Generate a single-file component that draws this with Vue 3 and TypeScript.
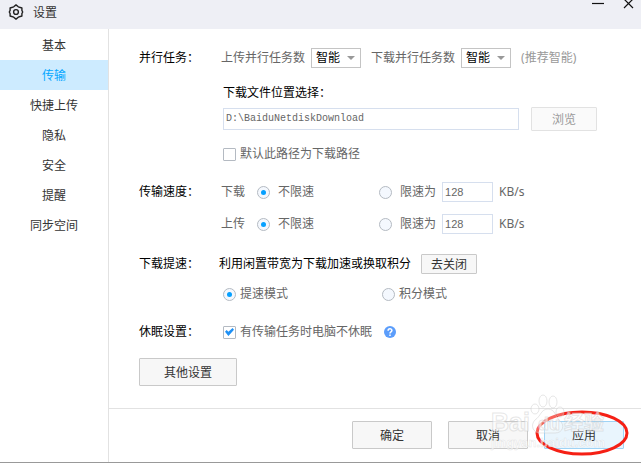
<script setup lang="ts">
import { ref } from 'vue'

type Limit = 'none' | 'custom'
interface SpeedRow {
  id: string
  name: string
  limit: Limit
  value: string
}

const tabs: string[] = ['基本', '传输', '快捷上传', '隐私', '安全', '提醒', '同步空间']
const activeTab = ref<string>('传输')

const uploadTasks = ref<string>('智能')
const downloadTasks = ref<string>('智能')
const taskOptions: string[] = ['智能', '1', '2', '3', '4', '5']

const downloadPath = ref<string>('D:\\BaiduNetdiskDownload')
const useAsDefault = ref<boolean>(false)
const keepAwake = ref<boolean>(true)
const boostMode = ref<string>('speed')

const speeds = ref<SpeedRow[]>([
  { id: 'down', name: '下载', limit: 'none', value: '128' },
  { id: 'up', name: '上传', limit: 'none', value: '128' },
])
</script>

<template>
  <div class="window">
    <header class="titlebar">
      <svg class="gear" viewBox="0 0 16 16" aria-hidden="true">
        <path d="M8 0.9 L10.3 2.8 L13.9 4 V6.4 L14.7 8 L13.9 9.6 V12 L10.3 13.2 L8 15.1 L5.7 13.2 L2.1 12 V9.6 L1.3 8 L2.1 6.4 V4 L5.7 2.8 Z" />
        <circle cx="8" cy="8" r="2.4" />
      </svg>
      <h1>设置</h1>
      <div class="controls">
        <button type="button" aria-label="最小化">
          <svg viewBox="0 0 12 12"><path d="M0 4.5 H12" /></svg>
        </button>
        <button type="button" aria-label="关闭">
          <svg viewBox="0 0 12 12"><path d="M1 0 L10 9 M10 0 L1 9" /></svg>
        </button>
      </div>
    </header>

    <div class="body">
      <nav class="sidebar">
        <button
          v-for="tab in tabs"
          :key="tab"
          type="button"
          :class="{ active: tab === activeTab }"
          @click="activeTab = tab"
        >{{ tab }}</button>
      </nav>

      <main class="main">
        <form class="settings" @submit.prevent>
          <section>
            <h2>并行任务：</h2>
            <div class="fields">
              <div class="row tasks">
                <label for="upload-tasks">上传并行任务数</label>
                <span class="select">
                  <select id="upload-tasks" v-model="uploadTasks">
                    <option v-for="o in taskOptions" :key="o">{{ o }}</option>
                  </select>
                  <svg viewBox="0 0 8 4"><path d="M0 0 H8 L4 4 Z" /></svg>
                </span>
                <label for="download-tasks" class="second">下载并行任务数</label>
                <span class="select">
                  <select id="download-tasks" v-model="downloadTasks">
                    <option v-for="o in taskOptions" :key="o">{{ o }}</option>
                  </select>
                  <svg viewBox="0 0 8 4"><path d="M0 0 H8 L4 4 Z" /></svg>
                </span>
                <span class="hint">(推荐智能)</span>
              </div>
              <div class="location">
                <label class="row strong" for="path">下载文件位置选择：</label>
                <div class="row path">
                  <input id="path" v-model="downloadPath" type="text" class="box mono" />
                  <button type="button" class="btn browse" disabled>浏览</button>
                </div>
                <label class="row check">
                  <input v-model="useAsDefault" type="checkbox" />默认此路径为下载路径
                </label>
              </div>
            </div>
          </section>

          <section>
            <h2>传输速度：</h2>
            <div class="fields speeds">
              <div v-for="s in speeds" :key="s.id" class="row speed">
                <span>{{ s.name }}</span>
                <label class="option">
                  <input v-model="s.limit" type="radio" :name="s.id" value="none" />不限速
                </label>
                <label class="option">
                  <input v-model="s.limit" type="radio" :name="s.id" value="custom" />限速为
                </label>
                <input v-model="s.value" type="text" class="box number" :aria-label="s.name + '限速'" />
                <span class="unit">KB/s</span>
              </div>
            </div>
          </section>

          <section>
            <h2>下载提速：</h2>
            <div class="fields">
              <div class="row strong">
                利用闲置带宽为下载加速或换取积分
                <button type="button" class="btn small">去关闭</button>
              </div>
              <div class="row modes">
                <label class="check">
                  <input v-model="boostMode" type="radio" name="boost" value="speed" />提速模式
                </label>
                <label class="check">
                  <input v-model="boostMode" type="radio" name="boost" value="points" />积分模式
                </label>
              </div>
            </div>
          </section>

          <section>
            <h2>休眠设置：</h2>
            <div class="row sleep">
              <label class="check">
                <input v-model="keepAwake" type="checkbox" />有传输任务时电脑不休眠
              </label>
              <svg class="help" viewBox="0 0 12 12" aria-hidden="true">
                <circle cx="6" cy="6" r="6" />
                <path d="M4.1 4.8 C4.1 2.2 7.9 2.2 7.9 4.6 C7.9 5.9 6 5.9 6 7.4" />
                <path d="M6 8.5 V9.9" />
              </svg>
            </div>
          </section>

          <button type="button" class="btn other">其他设置</button>
        </form>

        <footer class="footer">
          <button type="button" class="btn">确定</button>
          <button type="button" class="btn">取消</button>
          <span class="apply">
            <button type="button" class="btn primary">应用</button>
            <svg class="ring" viewBox="0 0 96 48" aria-hidden="true">
              <ellipse cx="48" cy="24" rx="45" ry="21" />
            </svg>
          </span>
          <svg class="watermark" viewBox="0 0 124 64" aria-hidden="true">
            <text class="brand" x="2" y="39">Bai</text>
            <g class="paw">
              <ellipse cx="46" cy="17" rx="4" ry="5" />
              <ellipse cx="54" cy="9" rx="4" ry="6" />
              <ellipse cx="64" cy="10" rx="4" ry="6" />
              <ellipse cx="71" cy="20" rx="4" ry="5" />
              <path d="M59 17 C52 17 52 24 46 28 C41 33 44 41 51 41 H66 C74 41 76 33 71 29 C66 24 66 17 59 17 Z" />
            </g>
            <text class="du" x="49" y="38">du</text>
            <text class="cn" x="75" y="38">经验</text>
            <text class="site" x="2" y="55">jingyan.baidu.com</text>
          </svg>
        </footer>
      </main>
    </div>
  </div>
</template>

<style>
body {
  margin: 0;
  background: #fff;
}
</style>

<style scoped>
.window {
  box-sizing: border-box;
  display: flex;
  flex-direction: column;
  min-height: calc(100vh - 1px);
  overflow: hidden;
  border-bottom: 1px solid #999;
  background: #fff;
  color: #666;
  font: 12px/20px "Noto Sans", "Noto Sans CJK SC", sans-serif;
}
.window *,
.window *::before {
  box-sizing: border-box;
}
button,
input,
select {
  margin: 0;
  padding: 0;
  font: inherit;
  color: inherit;
}
h1,
h2 {
  margin: 0;
  font-size: 12px;
  font-weight: 400;
}
label,
span {
  white-space: nowrap;
}

.titlebar {
  display: flex;
  height: 29px;
  padding: 3px 6px 0 8px;
  background: #eeeff5;
  color: #333;
}
.gear {
  width: 16px;
  height: 16px;
  margin: 1px 9px 0 0;
  fill: none;
  stroke: #222;
  stroke-width: 1.4;
  stroke-linejoin: round;
}
.controls {
  display: flex;
  gap: 19px;
  margin: -4px 0 0 auto;
}
.controls button {
  width: 12px;
  height: 12px;
  border: 0;
  background: none;
  line-height: 0;
}
.controls svg {
  width: 12px;
  height: 12px;
  fill: none;
  stroke: #111;
  stroke-width: 1.2;
}

.body {
  display: flex;
  flex: 1;
}
.sidebar {
  display: flex;
  flex-direction: column;
  flex: none;
  width: 109px;
  padding-top: 1px;
  border-right: 1px solid #e2e2e2;
}
.sidebar button {
  height: 30px;
  padding-top: 2px;
  border: 0;
  background: none;
  color: #333;
}
.sidebar button.active {
  background: #cdebff;
  color: #06a7ff;
}
.main {
  display: flex;
  flex-direction: column;
  flex: 1;
  min-width: 0;
}

.settings {
  flex: 1;
  padding: 19px 44px 22px 30px;
}
section {
  display: flex;
}
section + section {
  margin-top: 18px;
}
h2 {
  flex: none;
  width: 80px;
  line-height: 20px;
  color: #000;
}
.fields {
  flex: 1;
}
.row {
  display: flex;
  align-items: center;
  min-height: 20px;
}
.strong {
  color: #000;
}
.tasks {
  gap: 6px;
  padding-left: 2px;
}
.tasks .second,
.tasks .hint {
  margin-left: 4px;
}
.hint {
  color: #999;
}
.select {
  display: grid;
  align-items: center;
  width: 50px;
}
.select select,
.select svg {
  grid-area: 1 / 1;
}
.select select {
  height: 20px;
  padding-left: 4px;
  border: 1px solid #c4c4c4;
  border-radius: 0;
  background: #fff;
  color: #000;
  line-height: 18px;
  appearance: none;
}
.select svg {
  justify-self: end;
  width: 8px;
  height: 4px;
  margin-right: 6px;
  fill: #999;
  pointer-events: none;
}
.location {
  padding: 15px 0 0 4px;
}
.path {
  gap: 12px;
  margin: 4px 0 13px;
}
.box {
  border: 1px solid #d6dfee;
  background: #fff;
}
.mono {
  flex: 1;
  min-width: 0;
  height: 22px;
  padding: 0 2px 2px;
  font: 10px "Liberation Mono", monospace;
}
.number {
  width: 51px;
  height: 20px;
  padding: 0 2px;
  margin: 0 6px;
  font: 11px "Liberation Sans", sans-serif;
}
.check {
  display: flex;
  align-items: center;
  gap: 4px;
}
.speeds {
  display: grid;
  gap: 12px;
  padding: 0 0 2px 2px;
}
.option {
  display: flex;
  align-items: center;
  gap: 8px;
}
.speed .option:nth-child(2) {
  width: 122px;
  margin-left: 12px;
}
.modes {
  margin-top: 10px;
  padding-left: 4px;
}
.modes .check:first-child {
  width: 159px;
}
.sleep {
  gap: 12px;
  padding-left: 4px;
}
.help {
  width: 12px;
  height: 12px;
  fill: #5b9dfb;
}
.help path {
  fill: none;
  stroke: #fff;
  stroke-width: 1.5;
}

input[type='radio'],
input[type='checkbox'] {
  display: grid;
  place-items: center;
  flex: none;
  width: 13px;
  height: 13px;
  border: 1px solid #b4bac2;
  background: #fff;
  appearance: none;
}
input[type='radio'] {
  border-radius: 50%;
  background: #f4f8fe;
}
input[type='checkbox'] {
  border-radius: 1px;
}
input[type='radio']:checked::before {
  content: '';
  width: 5px;
  height: 5px;
  border-radius: 50%;
  background: #06a0ff;
}
input[type='checkbox']:checked::before {
  content: '';
  width: 9px;
  height: 8px;
  background: #1e90f5;
  clip-path: polygon(0 46%, 18% 24%, 38% 48%, 84% 0, 100% 22%, 38% 100%);
}

.btn {
  width: 80px;
  height: 28px;
  padding-top: 1px;
  border: 1px solid #c9c9c9;
  border-radius: 1px;
  background: #f7f7f7;
  color: #333;
}
.browse {
  width: 66px;
  height: 24px;
  border-color: #e2e2e2;
  background: #fafafa;
  color: #999;
}
.small {
  width: 56px;
  height: 20px;
  margin-left: 10px;
  line-height: 18px;
}
.other {
  width: 98px;
  margin-top: 16px;
}
.primary {
  border-color: #9fd3f5;
  background: #e9f5fd;
}
.footer {
  position: relative;
  display: flex;
  justify-content: flex-end;
  gap: 16px;
  padding: 12px 17px 13px;
  border-top: 1px solid #e2e2e2;
}
.apply {
  position: relative;
  display: flex;
}
.ring {
  position: absolute;
  top: -12px;
  left: -10px;
  width: 96px;
  height: 48px;
  fill: none;
  stroke: #f52015;
  stroke-width: 3;
  pointer-events: none;
}
.watermark {
  position: absolute;
  top: -17px;
  right: 28px;
  width: 124px;
  height: 64px;
  fill: #fff;
  fill-opacity: 0.6;
  stroke: #c8c8c8;
  stroke-opacity: 0.45;
  stroke-width: 1;
  pointer-events: none;
  font-family: "Liberation Sans", "Noto Sans CJK SC", sans-serif;
  font-weight: 700;
}
.paw {
  fill-opacity: 0.3;
}
.brand {
  font-size: 25px;
}
.du {
  font-size: 18px;
}
.cn {
  font-size: 20px;
}
.site {
  font-size: 13px;
  stroke-width: 0.5;
}
</style>
